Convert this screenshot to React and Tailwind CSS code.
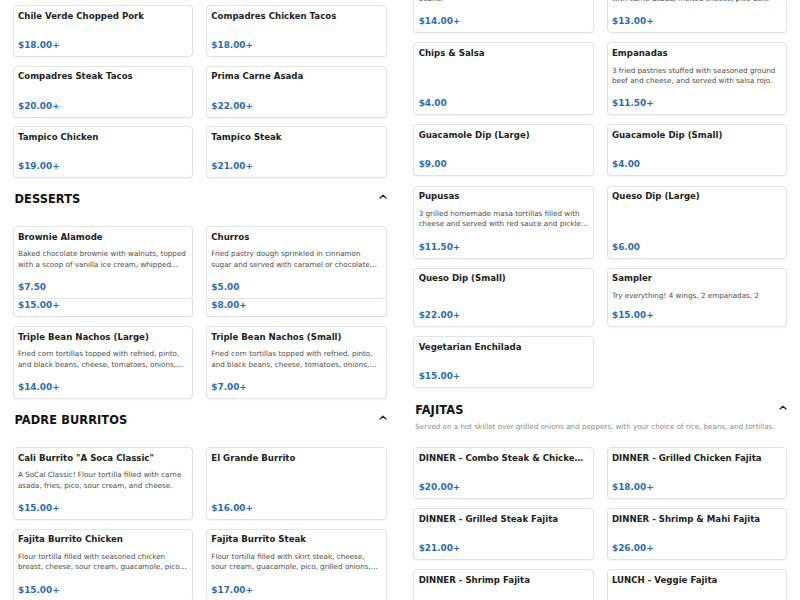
import React from "react";

const leftTop = [
  { title: "Chile Verde Chopped Pork", price: "$18.00+" },
  { title: "Compadres Chicken Tacos", price: "$18.00+" },
  { title: "Compadres Steak Tacos", price: "$20.00+" },
  { title: "Prima Carne Asada", price: "$22.00+" },
  { title: "Tampico Chicken", price: "$19.00+" },
  { title: "Tampico Steak", price: "$21.00+" },
];

const dessertsA = [
  {
    title: "Brownie Alamode",
    desc: "Baked chocolate brownie with walnuts, topped with a scoop of vanilla ice cream, whipped cream, and chocolate sauce.",
    price: "$7.50",
  },
  {
    title: "Churros",
    desc: "Fried pastry dough sprinkled in cinnamon sugar and served with caramel or chocolate dipping sauce.",
    price: "$5.00",
  },
];

const dessertsTail = ["$15.00+", "$8.00+"];

const dessertsB = [
  {
    title: "Triple Bean Nachos (Large)",
    desc: "Fried corn tortillas topped with refried, pinto, and black beans, cheese, tomatoes, onions, jalapeños, and sour cream.",
    price: "$14.00+",
  },
  {
    title: "Triple Bean Nachos (Small)",
    desc: "Fried corn tortillas topped with refried, pinto, and black beans, cheese, tomatoes, onions, jalapeños, and sour cream.",
    price: "$7.00+",
  },
];

const burritos = [
  {
    title: 'Cali Burrito "A Soca Classic"',
    desc: "A SoCal Classic! Flour tortilla filled with carne asada, fries, pico, sour cream, and cheese.",
    price: "$15.00+",
  },
  { title: "El Grande Burrito", price: "$16.00+" },
  {
    title: "Fajita Burrito Chicken",
    desc: "Flour tortilla filled with seasoned chicken breast, cheese, sour cream, guacamole, pico de gallo, and rice.",
    price: "$15.00+",
  },
  {
    title: "Fajita Burrito Steak",
    desc: "Flour tortilla filled with skirt steak, cheese, sour cream, guacamole, pico, grilled onions, and peppers.",
    price: "$17.00+",
  },
];

const starters = [
  {
    title: "Carne Asada Nachos",
    desc: "Tortilla chips piled high with carne asada and beans.",
    price: "$14.00+",
  },
  {
    title: "Carne Asada Fries",
    desc: "Our crispy seasoned french fries piled high with carne asada, melted cheese, pico de gallo, and sour cream.",
    price: "$13.00+",
  },
  { title: "Chips & Salsa", price: "$4.00" },
  {
    title: "Empanadas",
    desc: "3 fried pastries stuffed with seasoned ground beef and cheese, and served with salsa rojo.",
    price: "$11.50+",
  },
  { title: "Guacamole Dip (Large)", price: "$9.00" },
  { title: "Guacamole Dip (Small)", price: "$4.00" },
  {
    title: "Pupusas",
    desc: "3 grilled homemade masa tortillas filled with cheese and served with red sauce and pickled cabbage.",
    price: "$11.50+",
  },
  { title: "Queso Dip (Large)", price: "$6.00" },
  { title: "Queso Dip (Small)", price: "$22.00+" },
  {
    title: "Sampler",
    desc: "Try everything! 4 wings, 2 empanadas, 2 pupusas, chips and salsa.",
    price: "$15.00+",
    short: true,
  },
  { title: "Vegetarian Enchilada", price: "$15.00+" },
];

const fajitas = [
  { title: "DINNER - Combo Steak & Chicken Fajita", price: "$20.00+" },
  { title: "DINNER - Grilled Chicken Fajita", price: "$18.00+" },
  { title: "DINNER - Grilled Steak Fajita", price: "$21.00+" },
  { title: "DINNER - Shrimp & Mahi Fajita", price: "$26.00+" },
  { title: "DINNER - Shrimp Fajita", price: "$24.00+" },
  { title: "LUNCH - Veggie Fajita", price: "$12.00+" },
];

function Chevron() {
  return (
    <svg width="8" height="5" viewBox="0 0 8 5" className="mt-[1.5px] shrink-0">
      <polyline
        points="1,4 4,1.2 7,4"
        fill="none"
        stroke="#222"
        strokeWidth="1.2"
        strokeLinecap="round"
        strokeLinejoin="round"
      />
    </svg>
  );
}

function ItemCard({ title, desc, price, short }) {
  return (
    <div className="flex min-w-0 flex-col rounded-[4px] border border-[#e3e3e3] bg-white px-[4.3px] pt-[4.7px] pb-[5px] shadow-[0_1px_2px_rgba(0,0,0,0.05)]">
      <div className="truncate text-[8.6px] leading-[10.67px] font-bold text-[#1d1d1d]">
        {title}
      </div>
      {desc &&
        (short ? (
          <div className="mt-[6.93px] h-[7.1px]">
            <p className="h-[10.4px] overflow-hidden text-[7.2px] leading-[10.4px] text-[#4a4a4a]">
              {desc}
            </p>
          </div>
        ) : (
          <p className="mt-[6.93px] line-clamp-2 text-[7.2px] leading-[10.4px] text-[#4a4a4a]">
            {desc}
          </p>
        ))}
      <div
        className={
          desc
            ? "mt-auto pt-[10.9px] text-[8.9px] leading-[12px] font-bold text-[#2b6cb0]"
            : "mt-auto pt-[17.6px] text-[8.9px] leading-[12px] font-bold text-[#2b6cb0]"
        }
      >
        {price}
      </div>
    </div>
  );
}

function CardGrid({ items, className = "" }) {
  return (
    <div className={"grid grid-cols-2 gap-x-[12.67px] " + className}>
      {items.map((it, i) => (
        <ItemCard key={i} {...it} />
      ))}
    </div>
  );
}

function SectionHeader({ title, note }) {
  return (
    <div className={note ? "mt-[15.5px] mb-[15.3px]" : "mt-[14.4px] mb-[19.4px]"}>
      <div className="flex items-start justify-between pl-[1.8px]">
        <h2 className="text-[11.4px] leading-[14px] font-bold tracking-[0.1px] text-[#111]">
          {title}
        </h2>
        <Chevron />
      </div>
      {note && (
        <p className="mt-[4.7px] pl-[2px] text-[7.15px] leading-[10px] text-[#8a8a8a]">
          {note}
        </p>
      )}
    </div>
  );
}

export default function App() {
  return (
    <div className="h-[600px] w-[800px] overflow-hidden bg-white font-['DejaVu_Sans',sans-serif]">
      <div className="grid grid-cols-2 gap-x-[26.67px] px-[12.67px]">
        {/* left column */}
        <div className="flex min-w-0 flex-col pt-[5px]">
          <CardGrid items={leftTop} className="gap-y-[8.6px]" />

          <SectionHeader title="DESSERTS" />
          <CardGrid items={dessertsA} className="gap-y-[8.6px]" />
          <div className="mt-[0.3px] grid grid-cols-2 gap-x-[12.67px]">
            {dessertsTail.map((p, i) => (
              <div
                key={i}
                className="h-[17.7px] rounded-b-[4px] border-x border-b border-[#e3e3e3] bg-white px-[4.3px] shadow-[0_1px_2px_rgba(0,0,0,0.05)]"
              >
                <div className="pt-[0.3px] text-[8.9px] leading-[12px] font-bold text-[#2b6cb0]">
                  {p}
                </div>
              </div>
            ))}
          </div>
          <CardGrid items={dessertsB} className="mt-[9.3px] gap-y-[8.6px]" />

          <SectionHeader title="PADRE BURRITOS" />
          <CardGrid items={burritos} className="gap-y-[8.9px]" />
        </div>

        {/* right column */}
        <div className="flex min-w-0 flex-col">
          <CardGrid items={starters} className="mt-[-39.7px] gap-y-[9.1px]" />

          <SectionHeader
            title="FAJITAS"
            note="Served on a hot skillet over grilled onions and peppers, with your choice of rice, beans, and tortillas."
          />
          <CardGrid items={fajitas} className="gap-y-[8.9px]" />
        </div>
      </div>
    </div>
  );
}
